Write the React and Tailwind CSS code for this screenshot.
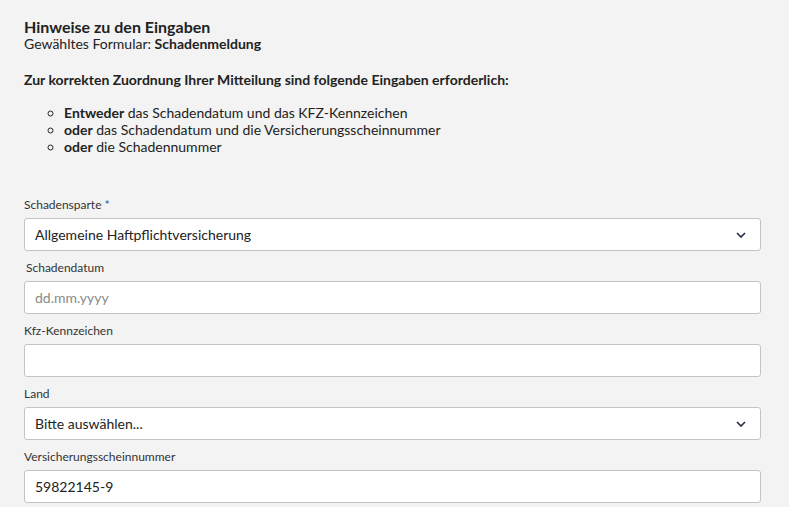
import React from 'react';

const Chevron = () => (
  <svg width="10" height="6" viewBox="0 0 10 6" className="absolute right-[14px] top-1/2 -translate-y-1/2">
    <path d="M1 1l4 4 4-4" fill="none" stroke="#1f2a44" strokeWidth="1.6" />
  </svg>
);

const Field = ({ label, required, indent, children }) => (
  <div className="flex flex-col">
    <label className={`text-[12px] leading-[15px] text-[#333] mb-[6px] ${indent ? 'pl-[2px]' : ''}`}>
      {label}
      {required && <span className="text-[#1e80d6] font-bold"> *</span>}
    </label>
    {children}
  </div>
);

const boxClass =
  'relative h-[33px] w-full bg-white border border-[#c4c4c4] rounded-[3px] flex items-center pl-[10px] text-[14px]';

const App = () => {
  return (
    <div className="min-h-screen bg-[#f3f3f3] pl-[24px] pr-[28px] pt-[18px] text-[#222]" style={{ fontFamily: 'Lato, "Open Sans", sans-serif' }}>
      <h1 className="text-[16px] leading-[17px] font-bold">Hinweise zu den Eingaben</h1>
      <p className="text-[14px] leading-[17px]">
        Gewähltes Formular: <span className="font-bold">Schadenmeldung</span>
      </p>
      <p className="text-[14px] leading-[17px] font-bold mt-[19px]">
        Zur korrekten Zuordnung Ihrer Mitteilung sind folgende Eingaben erforderlich:
      </p>
      <ul className="mt-[16px] text-[14px] leading-[17px] pl-[40px] list-[circle]">
        <li><span className="font-bold">Entweder</span> das Schadendatum und das KFZ-Kennzeichen</li>
        <li><span className="font-bold">oder</span> das Schadendatum und die Versicherungsscheinnummer</li>
        <li><span className="font-bold">oder</span> die Schadennummer</li>
      </ul>

      <div className="mt-[42px] flex flex-col gap-[9px]">
        <Field label="Schadensparte" required>
          <div className={`${boxClass} text-[#222]`}>
            Allgemeine Haftpflichtversicherung
            <Chevron />
          </div>
        </Field>
        <Field label="Schadendatum" indent>
          <div className={`${boxClass} text-[#8a8a8a]`}>dd.mm.yyyy</div>
        </Field>
        <Field label="Kfz-Kennzeichen">
          <div className={boxClass}></div>
        </Field>
        <Field label="Land">
          <div className={`${boxClass} text-[#222]`}>
            Bitte auswählen...
            <Chevron />
          </div>
        </Field>
        <Field label="Versicherungsscheinnummer">
          <div className={`${boxClass} text-[#222]`}>59822145-9</div>
        </Field>
      </div>
    </div>
  );
};

export default App;
